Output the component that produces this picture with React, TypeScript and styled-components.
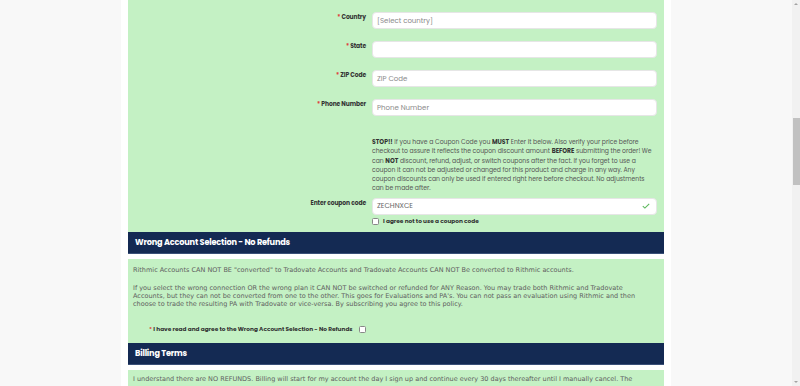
import { createGlobalStyle, styled } from "styled-components"

const GREEN = "#c4f1c4"
const NAVY = "#142a53"
const LABEL_FONT = `"Poppins", "Open Sans", "Noto Sans", sans-serif`
const BODY_FONT = `"DejaVu Sans", "Verdana", sans-serif`

const GlobalStyle = createGlobalStyle`
    html, body {
        margin: 0;
        padding: 0;
        height: 100%;
        overflow: hidden;
        background: #f8f8f8;
    }
    * {
        box-sizing: border-box;
    }
`

export default function App() {
    return <Page>
        <GlobalStyle/>
        <Main>
            <Column>
                <AddressPanel/>
                <SectionHeader>Wrong Account Selection - No Refunds</SectionHeader>
                <WrongAccountPanel/>
                <SectionHeader>Billing Terms</SectionHeader>
                <TermsPanel>
                    <TermsText>
                        I understand there are NO REFUNDS. Billing will start for my account the day I sign up and continue every 30 days thereafter until I manually cancel. The
                    </TermsText>
                </TermsPanel>
            </Column>
        </Main>
        <Scrollbar>
            <ScrollArrow $dir="up"/>
            <ScrollTrack>
                <ScrollThumb/>
            </ScrollTrack>
            <ScrollArrow $dir="down"/>
        </Scrollbar>
    </Page>
}

function AddressPanel() {
    return <GreenPanel $pad="12px 7px 6px 0">
        <FormGrid>
            <FieldLabel><Req>*</Req> Country</FieldLabel>
            <TextBox><Placeholder>[Select country]</Placeholder></TextBox>

            <FieldLabel><Req>*</Req> State</FieldLabel>
            <TextBox/>

            <FieldLabel><Req>*</Req> ZIP Code</FieldLabel>
            <TextBox><Placeholder>ZIP Code</Placeholder></TextBox>

            <FieldLabel><Req>*</Req> Phone Number</FieldLabel>
            <TextBox><Placeholder>Phone Number</Placeholder></TextBox>

            <span/>
            <CouponNotice>
                <b>STOP!!</b> If you have a Coupon Code you <b>MUST</b> Enter it below. Also verify your price before checkout to assure it reflects the coupon discount amount <b>BEFORE</b> submitting the order! We can <b>NOT</b> discount, refund, adjust, or switch coupons after the fact. If you forget to use a coupon it can not be adjusted or changed for this product and charge in any way. Any coupon discounts can only be used if entered right here before checkout. No adjustments can be made after.
            </CouponNotice>

            <FieldLabel>Enter coupon code</FieldLabel>
            <CouponCell>
                <TextBox>
                    <Value>ZECHNXCE</Value>
                    <svg width="8" height="6" viewBox="0 0 8 6">
                        <path d="M0.8 3.2 L2.9 5.1 L7.2 0.8" fill="none" stroke="#5cb85c" strokeWidth="1.1"/>
                    </svg>
                </TextBox>
                <CheckRow>
                    <CheckBox/>
                    I agree not to use a coupon code
                </CheckRow>
            </CouponCell>
        </FormGrid>
    </GreenPanel>
}

function WrongAccountPanel() {
    return <GreenPanel $pad="7px 18px 9px 5px">
        <PolicyText>
            Rithmic Accounts CAN NOT BE "converted" to Tradovate Accounts and Tradovate Accounts CAN NOT Be converted to Rithmic accounts.
        </PolicyText>
        <PolicyText>
            If you select the wrong connection OR the wrong plan it CAN NOT be switched or refunded for ANY Reason. You may trade both Rithmic and Tradovate Accounts, but they can not be converted from one to the other. This goes for Evaluations and PA's. You can not pass an evaluation using Rithmic and then choose to trade the resulting PA with Tradovate or vice-versa. By subscribing you agree to this policy.
        </PolicyText>
        <AgreeRow>
            <span><Req>*</Req> I have read and agree to the Wrong Account Selection - No Refunds</span>
            <CheckBox/>
        </AgreeRow>
    </GreenPanel>
}


const Page = styled.div`
    display: flex;
    width: 800px;
    height: 386px;
    background: #f8f8f8;
`

const Main = styled.div`
    flex: 1;
    display: flex;
    justify-content: center;
    overflow: hidden;
`

const Column = styled.div`
    width: 550px;
    padding: 0 7px;
    background: #ffffff;
    display: flex;
    flex-direction: column;
    & > * {
        flex-shrink: 0;
    }
`

const GreenPanel = styled.div<{ $pad: string }>`
    background: ${GREEN};
    padding: ${p => p.$pad};
`

const FormGrid = styled.div`
    display: grid;
    grid-template-columns: 238px 1fr;
    column-gap: 6px;
    row-gap: 12px;
    align-items: start;
`

const FieldLabel = styled.label`
    font-family: ${LABEL_FONT};
    font-weight: 700;
    font-size: 6px;
    line-height: 9px;
    padding-top: 1px;
    color: #333;
    text-align: right;
    letter-spacing: -0.1px;
`

const Req = styled.span`
    color: #e0403a;
`

const TextBox = styled.div`
    height: 17px;
    background: #fff;
    border: 1px solid #e6e6e6;
    border-radius: 4px;
    display: flex;
    align-items: center;
    justify-content: space-between;
    padding: 0 6px 0 4px;
    font-family: ${LABEL_FONT};
    font-size: 7px;
`

const Placeholder = styled.span`
    color: #8a8a8a;
`

const Value = styled.span`
    color: #666;
`

const CouponNotice = styled.p`
    margin: 10px 2px -8px 0;
    font-family: ${LABEL_FONT};
    font-size: 6.1px;
    line-height: 9.3px;
    color: #555;
    b {
        color: #333;
        font-weight: 700;
    }
`

const CouponCell = styled.div`
    display: flex;
    flex-direction: column;
    gap: 2px;
`

const CheckRow = styled.label`
    display: flex;
    align-items: center;
    gap: 4px;
    font-family: ${LABEL_FONT};
    font-weight: 700;
    font-size: 5.8px;
    color: #333;
`

const CheckBox = styled.span`
    display: inline-block;
    width: 7px;
    height: 7px;
    background: #fff;
    border: 1px solid #888;
    border-radius: 1.5px;
`

const SectionHeader = styled.div`
    height: 22px;
    margin-bottom: 5px;
    padding-left: 7px;
    display: flex;
    align-items: center;
    background: ${NAVY};
    border-bottom: 1px solid #3a5078;
    color: #fff;
    font-family: ${LABEL_FONT};
    font-weight: 700;
    font-size: 8.2px;
    letter-spacing: -0.2px;
`

const PolicyText = styled.p`
    margin: 0 0 10px 0;
    font-family: ${BODY_FONT};
    font-size: 6.5px;
    line-height: 8px;
    color: #606060;
`

const AgreeRow = styled.label`
    display: flex;
    align-items: center;
    gap: 6px;
    margin: 17px 0 0 16px;
    font-family: ${LABEL_FONT};
    font-weight: 700;
    font-size: 5.8px;
    color: #333;
`

const TermsPanel = styled.div`
    background: ${GREEN};
    padding: 4px 5px;
    flex: 1 0 auto;
`

const TermsText = styled.p`
    margin: 0;
    font-family: ${BODY_FONT};
    font-size: 6.5px;
    line-height: 10px;
    color: #606060;
`

const Scrollbar = styled.div`
    width: 8px;
    display: flex;
    flex-direction: column;
    background: #f1f1f1;
`

const ScrollTrack = styled.div`
    flex: 1;
    padding-top: 110px;
`

const ScrollThumb = styled.div`
    height: 67px;
    margin: 0 0.5px 0 1px;
    background: #c1c1c1;
`

const ScrollArrow = styled.div<{ $dir: "up" | "down" }>`
    height: 8px;
    display: flex;
    align-items: center;
    justify-content: center;
    &::before {
        content: "";
        border-left: 2px solid transparent;
        border-right: 2px solid transparent;
        ${p => p.$dir === "up" ? "border-bottom: 2px solid #a3a3a3;" : "border-top: 2px solid #a3a3a3;"}
    }
`
